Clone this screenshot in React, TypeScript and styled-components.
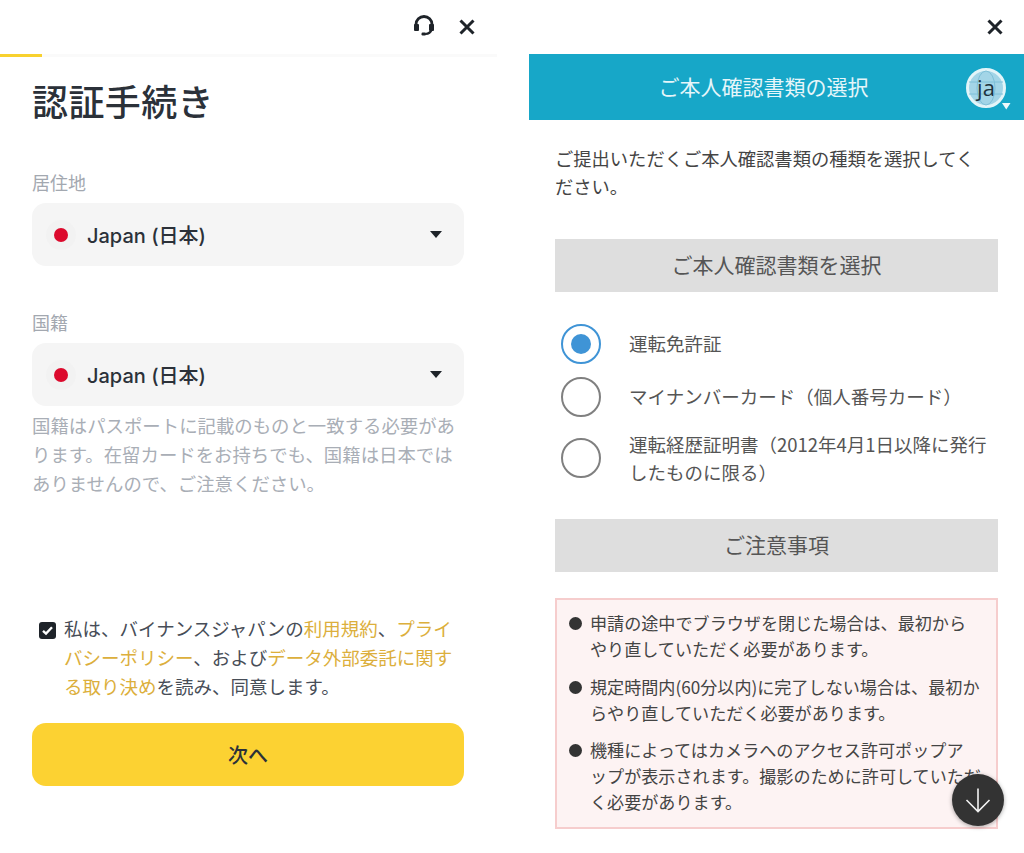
import React, { FunctionComponent } from "react";
import styled, { createGlobalStyle } from "styled-components";

const GlobalStyle = createGlobalStyle`
    html, body {
        margin: 0;
        padding: 0;
        background: #ffffff;
    }
    body {
        font-family: "Noto Sans CJK JP", "Noto Sans", sans-serif;
        overflow: hidden;
    }
`;

const Page = styled.div`
    width: 1024px;
    height: 853px;
    display: grid;
    grid-template-columns: 529px 495px;
    overflow: hidden;
`;

/* left panel: binance form */
const FormPanel = styled.section`
    display: flex;
    flex-direction: column;
    width: 497px;
`;

const FormTop = styled.div`
    height: 54px;
    display: flex;
    align-items: center;
    justify-content: flex-end;
    gap: 22px;
    padding: 0 21px 1px 0;
    box-sizing: border-box;
`;

const Progress = styled.div`
    height: 3px;
    background: #fafafa;
`;

const ProgressFill = styled.div`
    width: 42px;
    height: 3px;
    background: #f8d12f;
`;

const FormBody = styled.div`
    display: flex;
    flex-direction: column;
    padding: 0 33px 0 32px;
`;

const Title = styled.h1`
    margin: 17px 0 0;
    font-size: 36px;
    line-height: 52px;
    font-weight: 500;
    letter-spacing: 0.4px;
    color: #2b3139;
`;

const FieldLabel = styled.div<{ $top: number }>`
    margin-top: ${(p) => p.$top}px;
    font-size: 18px;
    line-height: 26px;
    color: #a3a8b0;
`;

const Select = styled.div`
    margin-top: 8px;
    height: 63px;
    background: #f5f5f5;
    border-radius: 14px;
    display: flex;
    align-items: center;
    padding: 0 22px 0 14px;
    box-sizing: border-box;
`;

const FlagHalo = styled.div`
    width: 30px;
    height: 30px;
    border-radius: 50%;
    background: #f2f2f2;
    display: flex;
    align-items: center;
    justify-content: center;
`;

const FlagDot = styled.div`
    width: 14px;
    height: 14px;
    border-radius: 50%;
    background: #dc0a2d;
`;

const SelectText = styled.span`
    margin-left: 11px;
    flex: 1;
    font-family: Inter, "Noto Sans CJK JP", sans-serif;
    font-size: 20px;
    font-weight: 500;
    color: #2b3139;
`;

const Caret = styled.div`
    width: 0;
    height: 0;
    border-left: 6px solid transparent;
    border-right: 6px solid transparent;
    border-top: 7px solid #1e2329;
`;

const Helper = styled.p`
    margin: 5px 0 0;
    font-size: 18.4px;
    line-height: 29px;
    color: #a9aeb6;
`;

const Consent = styled.div`
    margin-top: 116px;
    display: flex;
    gap: 8px;
    padding-left: 7px;
`;

const CheckBox = styled.div`
    flex: none;
    width: 17px;
    height: 17px;
    margin-top: 8px;
    border-radius: 3px;
    background: #1e2329;
    display: flex;
    align-items: center;
    justify-content: center;
`;

const ConsentText = styled.p`
    margin: 0;
    font-size: 18.5px;
    line-height: 29px;
    color: #474d57;
`;

const TermLink = styled.a`
    color: #dcaf3c;
`;

const NextButton = styled.button`
    margin-top: 22px;
    height: 63px;
    border: none;
    border-radius: 14px;
    background: #fcd232;
    font-family: inherit;
    font-size: 20px;
    font-weight: 500;
    color: #2b3139;
`;

/* right panel: document select */
const DocPanel = styled.section`
    position: relative;
    display: flex;
    flex-direction: column;
`;

const DocTop = styled.div`
    height: 54px;
    display: flex;
    align-items: center;
    justify-content: flex-end;
    padding-right: 20px;
    box-sizing: border-box;
`;

const Banner = styled.header`
    position: relative;
    height: 66px;
    background: #17a7c8;
    display: flex;
    align-items: center;
    justify-content: center;
    padding: 0 26px 2px 0;
    box-sizing: border-box;
    font-size: 21px;
    color: #e6f6fa;
`;

const LangBadge = styled.div`
    position: absolute;
    right: 18px;
    top: 14px;
    width: 40px;
    height: 40px;
`;

const LangText = styled.span`
    position: absolute;
    inset: 0 0 3px;
    display: flex;
    align-items: center;
    justify-content: center;
    font-family: "Open Sans", sans-serif;
    font-size: 22px;
    color: #20333d;
`;

const DocBody = styled.div`
    display: flex;
    flex-direction: column;
    padding: 0 26px;
`;

const Intro = styled.p`
    margin: 24px 0 0;
    max-width: 430px;
    font-size: 18.3px;
    line-height: 28px;
    color: #444444;
`;

const SectionBar = styled.div<{ $top: number }>`
    margin-top: ${(p) => p.$top}px;
    height: 53px;
    padding-bottom: 3px;
    box-sizing: border-box;
    background: #dedede;
    display: flex;
    align-items: center;
    justify-content: center;
    font-size: 21px;
    color: #555555;
`;

const Options = styled.div`
    margin-top: 25px;
    display: flex;
    flex-direction: column;
`;

const Option = styled.label<{ $height: number }>`
    height: ${(p) => p.$height}px;
    display: flex;
    align-items: center;
    padding-left: 6px;
`;

const Radio = styled.span<{ $on?: boolean }>`
    flex: none;
    width: 40px;
    height: 40px;
    box-sizing: border-box;
    border-radius: 50%;
    border: 2.5px solid ${(p) => (p.$on ? "#3f94d6" : "#808080")};
    display: flex;
    align-items: center;
    justify-content: center;
    &::after {
        content: "";
        display: ${(p) => (p.$on ? "block" : "none")};
        width: 20px;
        height: 20px;
        border-radius: 50%;
        background: #3f94d6;
    }
`;

const OptionText = styled.span`
    margin-left: 28px;
    max-width: 362px;
    padding-bottom: 1px;
    font-size: 18.5px;
    line-height: 28px;
    color: #555555;
`;

const Notice = styled.ul`
    margin: 26px 0 0;
    padding: 10px 12px 12px;
    list-style: none;
    background: #fdf3f3;
    border: 2px solid #f6cdcd;
    display: flex;
    flex-direction: column;
    gap: 11.5px;
`;

const NoticeItem = styled.li`
    display: flex;
    gap: 8px;
    font-size: 17.1px;
    line-height: 26px;
    white-space: nowrap;
    color: #444444;
`;

const Bullet = styled.span`
    flex: none;
    width: 13px;
    height: 13px;
    margin-top: 7px;
    border-radius: 50%;
    background: #333333;
`;

const ScrollFab = styled.button`
    position: absolute;
    left: 423px;
    top: 774px;
    width: 52px;
    height: 52px;
    padding: 0;
    border: none;
    border-radius: 50%;
    background: #333333;
    box-shadow: 0 1px 4px rgba(0, 0, 0, 0.35);
    display: flex;
    align-items: center;
    justify-content: center;
`;

const CloseIcon: FunctionComponent = () => (
    <svg width="18" height="18" viewBox="0 0 18 18" fill="none">
        <path
            d="M2.5 2.5L15.5 15.5M15.5 2.5L2.5 15.5"
            stroke="#1e2329"
            strokeWidth="3"
        />
    </svg>
);

const HeadsetIcon: FunctionComponent = () => (
    <svg width="24" height="24" viewBox="0 2 24 24" fill="none">
        <path
            d="M4 14V11.5a8 8 0 0 1 16 0V14"
            stroke="#1e2329"
            strokeWidth="2.8"
        />
        <rect x="2" y="11" width="5" height="7" rx="1" fill="#1e2329" />
        <rect x="17" y="11" width="5" height="7" rx="1" fill="#1e2329" />
        <path
            d="M19.5 17c-.8 2.2-3 3.7-6 4"
            stroke="#1e2329"
            strokeWidth="2.2"
        />
        <rect x="9.5" y="19.5" width="4.5" height="3" rx="1.2" fill="#1e2329" />
    </svg>
);

const Flag: FunctionComponent = () => (
    <FlagHalo>
        <FlagDot />
    </FlagHalo>
);

const App: FunctionComponent = () => {
    return (
        <>
            <GlobalStyle />
            <Page>
                <FormPanel>
                    <FormTop>
                        <HeadsetIcon />
                        <CloseIcon />
                    </FormTop>
                    <Progress>
                        <ProgressFill />
                    </Progress>
                    <FormBody>
                        <Title>認証手続き</Title>
                        <FieldLabel $top={43}>居住地</FieldLabel>
                        <Select>
                            <Flag />
                            <SelectText>Japan (日本)</SelectText>
                            <Caret />
                        </Select>
                        <FieldLabel $top={43}>国籍</FieldLabel>
                        <Select>
                            <Flag />
                            <SelectText>Japan (日本)</SelectText>
                            <Caret />
                        </Select>
                        <Helper>
                            国籍はパスポートに記載のものと一致する必要があります。在留カードをお持ちでも、国籍は日本ではありませんので、ご注意ください。
                        </Helper>
                        <Consent>
                            <CheckBox>
                                <svg width="13" height="13" viewBox="0 0 13 13" fill="none">
                                    <path
                                        d="M2 6.8L5 9.6L11 3.2"
                                        stroke="#ffffff"
                                        strokeWidth="2.4"
                                    />
                                </svg>
                            </CheckBox>
                            <ConsentText>
                                私は、バイナンスジャパンの<TermLink>利用規約</TermLink>、
                                <TermLink>プライバシーポリシー</TermLink>、および
                                <TermLink>データ外部委託に関する取り決め</TermLink>
                                を読み、同意します。
                            </ConsentText>
                        </Consent>
                        <NextButton>次へ</NextButton>
                    </FormBody>
                </FormPanel>
                <DocPanel>
                    <DocTop>
                        <CloseIcon />
                    </DocTop>
                    <Banner>
                        ご本人確認書類の選択
                        <LangBadge>
                            <svg width="46" height="46" viewBox="0 0 46 46" fill="none">
                                <circle cx="20" cy="20" r="18.5" fill="#a3d5e7" stroke="#e3f5f9" strokeWidth="3" />
                                <ellipse cx="20" cy="20" rx="9" ry="17" stroke="#7fc0d8" strokeWidth="1" />
                                <path d="M3 14H37M3 26H37" stroke="#7fc0d8" strokeWidth="1" />
                                <path d="M36 35H44.5L40.25 41.5Z" fill="#eef9fb" />
                            </svg>
                            <LangText>ja</LangText>
                        </LangBadge>
                    </Banner>
                    <DocBody>
                        <Intro>
                            ご提出いただくご本人確認書類の種類を選択してください。
                        </Intro>
                        <SectionBar $top={39}>ご本人確認書類を選択</SectionBar>
                        <Options>
                            <Option $height={53}>
                                <Radio $on />
                                <OptionText>運転免許証</OptionText>
                            </Option>
                            <Option $height={53}>
                                <Radio />
                                <OptionText>マイナンバーカード（個人番号カード）</OptionText>
                            </Option>
                            <Option $height={70}>
                                <Radio />
                                <OptionText>
                                    運転経歴証明書（2012年4月1日以降に発行したものに限る）
                                </OptionText>
                            </Option>
                        </Options>
                        <SectionBar $top={26}>ご注意事項</SectionBar>
                        <Notice>
                            <NoticeItem>
                                <Bullet />
                                <span>
                                    申請の途中でブラウザを閉じた場合は、最初から
                                    <br />
                                    やり直していただく必要があります。
                                </span>
                            </NoticeItem>
                            <NoticeItem>
                                <Bullet />
                                <span>
                                    規定時間内(60分以内)に完了しない場合は、最初か
                                    <br />
                                    らやり直していただく必要があります。
                                </span>
                            </NoticeItem>
                            <NoticeItem>
                                <Bullet />
                                <span>
                                    機種によってはカメラへのアクセス許可ポップア
                                    <br />
                                    ップが表示されます。撮影のために許可していただ
                                    <br />
                                    く必要があります。
                                </span>
                            </NoticeItem>
                        </Notice>
                    </DocBody>
                    <ScrollFab>
                        <svg width="28" height="28" viewBox="0 0 28 28" fill="none">
                            <path
                                d="M14 2.5V25.5M2.5 14L14 25.5L25.5 14"
                                stroke="#f2f2f2"
                                strokeWidth="1.6"
                            />
                        </svg>
                    </ScrollFab>
                </DocPanel>
            </Page>
        </>
    );
};

export default App;
